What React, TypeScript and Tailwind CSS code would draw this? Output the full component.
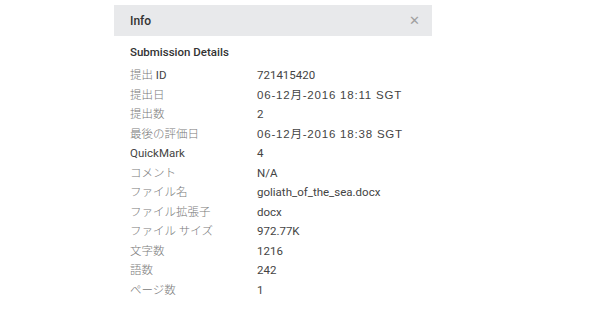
import React from "react"

type Row = { label: string; value: string; wide?: boolean }

const rows: Row[] = [
  { label: "提出 ID", value: "721415420" },
  { label: "提出日", value: "06-12月-2016 18:11 SGT", wide: true },
  { label: "提出数", value: "2" },
  { label: "最後の評価日", value: "06-12月-2016 18:38 SGT", wide: true },
  { label: "QuickMark", value: "4" },
  { label: "コメント", value: "N/A" },
  { label: "ファイル名", value: "goliath_of_the_sea.docx" },
  { label: "ファイル拡張子", value: "docx" },
  { label: "ファイル サイズ", value: "972.77K" },
  { label: "文字数", value: "1216" },
  { label: "語数", value: "242" },
  { label: "ページ数", value: "1" },
]

// ASCII部分は濃く、日本語部分は細く薄く表示する
function Label({ text }: { text: string }) {
  const parts = text.match(/[\x20-\x7e]+|[^\x20-\x7e]+/g) ?? []
  return (
    <span className="w-[127px] shrink-0">
      {parts.map((p, i) =>
        /^[\x20-\x7e]+$/.test(p) ? (
          <span key={i} className="text-[#444]">{p}</span>
        ) : (
          <span key={i} className="text-[#7a7a7a] font-light">{p}</span>
        )
      )}
    </span>
  )
}

export default function App() {
  return (
    <div className="w-[594px] h-[334px] bg-white font-['Roboto','Noto_Sans_CJK_JP',sans-serif]">
      <div className="ml-[114px] pt-[5px] w-[318px]">
        <div className="h-[31px] bg-[#e8e9eb] flex items-center justify-between pl-4 pr-3">
          <span className="text-[12px] font-medium text-[#333]">Info</span>
          <span className="text-[#a0a0a0] text-[13px] leading-none">✕</span>
        </div>
        <div className="pl-4 pt-[7px]">
          <h2 className="text-[11.5px] font-medium text-[#333] h-[18px] leading-[18px]">
            Submission Details
          </h2>
          <div className="mt-[5px]">
            {rows.map((r) => (
              <div key={r.label} className="flex h-[19.5px] items-center text-[11.5px]">
                <Label text={r.label} />
                <span
                  className={
                    r.wide
                      ? "text-[#444] font-['Liberation_Sans','Noto_Sans_CJK_JP',sans-serif] tracking-[0.8px]"
                      : "text-[#444]"
                  }
                >
                  {r.value}
                </span>
              </div>
            ))}
          </div>
        </div>
      </div>
    </div>
  )
}
